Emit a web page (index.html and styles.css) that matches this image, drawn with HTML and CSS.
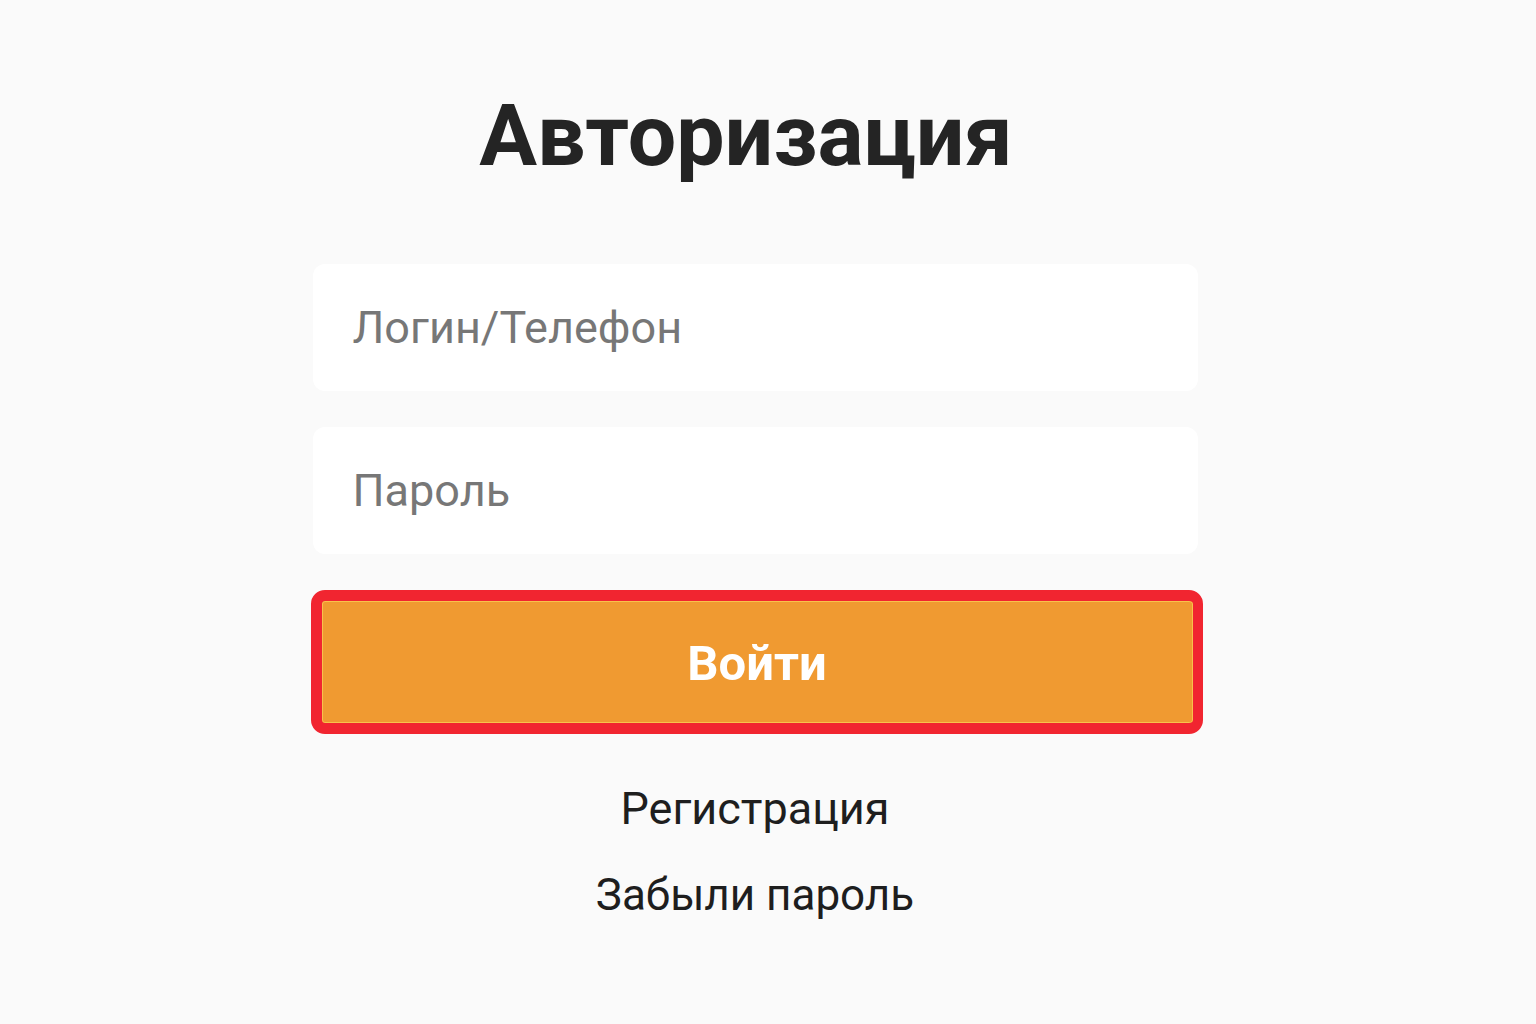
FILE: index.html
```html
<!DOCTYPE html>
<html lang="ru">
<head>
<meta charset="utf-8">
<title>Авторизация</title>
<link rel="stylesheet" href="styles.css">
</head>
<body>
<main class="page">
  <h1 class="title">Авторизация</h1>
  <form class="form">
    <div class="field"><span class="placeholder">Логин/Телефон</span></div>
    <div class="field"><span class="placeholder">Пароль</span></div>
    <button type="button" class="submit"><span class="submit-inner">Войти</span></button>
  </form>
  <nav class="links">
    <a class="link">Регистрация</a>
    <a class="link link-small">Забыли пароль</a>
  </nav>
</main>
</body>
</html>
```

FILE: styles.css
```css
html, body {
  margin: 0;
  padding: 0;
  background: #fafafa;
  height: 100%;
}
body {
  font-family: Roboto, "Liberation Sans", Arial, sans-serif;
  color: #222;
}
.page {
  display: flex;
  flex-direction: column;
  align-items: center;
  padding: 83px 26px 0 0;
}
.title {
  margin: 0 18px 0 0;
  font-size: 86px;
  line-height: 106px;
  font-weight: 700;
  color: #242424;
  letter-spacing: 0;
}
.form {
  margin-top: 75px;
  display: flex;
  flex-direction: column;
  align-items: center;
  gap: 36px;
}
.field {
  width: 885px;
  height: 127px;
  background: #ffffff;
  border-radius: 12px;
  display: flex;
  align-items: center;
  padding-left: 40px;
  box-sizing: border-box;
}
.placeholder {
  font-size: 45px;
  color: #777777;
}
.submit {
  width: 892px;
  height: 144px;
  margin-left: 3px;
  padding: 0;
  border: 11px solid #f12530;
  border-right-width: 10px;
  border-radius: 14px;
  background: #f09a31;
  box-shadow: inset 0 0 0 1px #f8c24c;
  box-sizing: border-box;
  display: flex;
  align-items: center;
  justify-content: center;
  font-family: inherit;
  cursor: pointer;
}
.submit-inner {
  font-size: 49px;
  font-weight: 700;
  color: #ffffff;
  margin-top: 2px;
}
.links {
  margin-top: 49px;
  display: flex;
  flex-direction: column;
  align-items: center;
  gap: 34px;
}
.link {
  font-size: 45px;
  line-height: 52px;
  color: #1e1e1e;
  text-decoration: none;
}
.link-small {
  font-size: 44px;
}
```
